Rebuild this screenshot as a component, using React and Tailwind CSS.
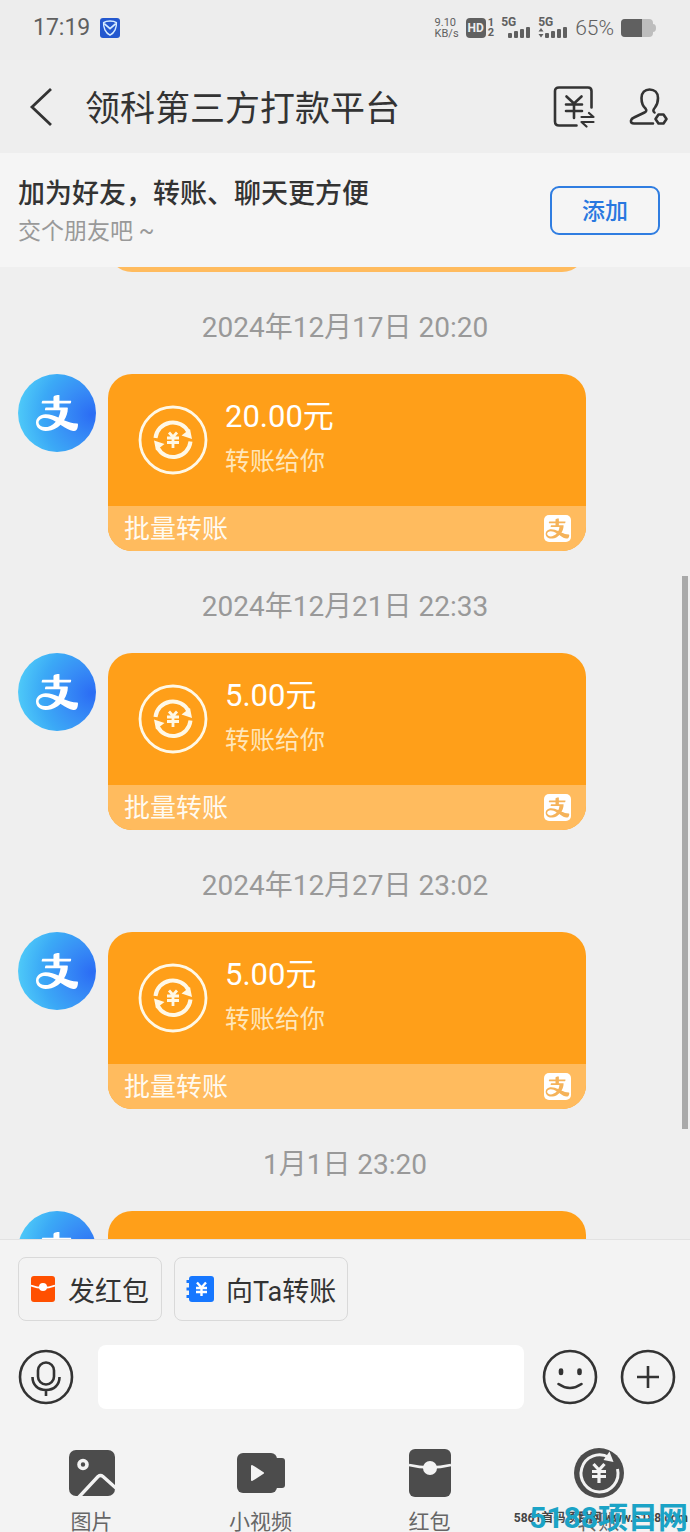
import { useState } from "react";
import { AiOutlineAlipay } from "react-icons/ai";

const messages = [
  { date: "2024年12月17日 20:20", amount: "20.00元" },
  { date: "2024年12月21日 22:33", amount: "5.00元" },
  { date: "2024年12月27日 23:02", amount: "5.00元" },
  { date: "1月1日 23:20", amount: "5.00元" },
];

function ShieldIcon() {
  return (
    <svg viewBox="0 0 20 20" className="size-5">
      <rect width="20" height="20" rx="3" fill="#2458cf" />
      <path d="M10 3 C7.5 3 5 3.6 3.6 4.6 C3.2 9.5 5.4 15 10 17.2 C14.6 15 16.8 9.5 16.4 4.6 C15 3.6 12.5 3 10 3 Z" fill="none" stroke="#d6ecff" strokeWidth="1.4" />
      <path d="M4.2 5.6 L10 10.6 L15.8 5.6" fill="none" stroke="#d6ecff" strokeWidth="1.8" />
    </svg>
  );
}

function SignalBars({ arrows }) {
  return (
    <svg viewBox="0 0 30 12" className="h-3 w-[30px]" fill="#606060">
      {arrows && <path d="M0.5 4.5 L3 1 L5.5 4.5 Z M0.5 7 L3 10.5 L5.5 7 Z" />}
      <rect x="7" y="6" width="4" height="5" rx="1" />
      <rect x="13" y="4" width="4" height="7" rx="1" />
      <rect x="19" y="2" width="4" height="9" rx="1" />
      <rect x="25" y="0" width="4" height="11" rx="1" />
    </svg>
  );
}

function BatteryIcon() {
  return (
    <svg viewBox="0 0 36 18" className="h-[18px] w-9">
      <path d="M4 0 H28 A4 4 0 0 1 32 4 V5 A3 4 0 0 1 32 13 V14 A4 4 0 0 1 28 18 H4 A4 4 0 0 1 0 14 V4 A4 4 0 0 1 4 0 Z" fill="#bdbdbd" />
      <path d="M4 0 H21 V18 H4 A4 4 0 0 1 0 14 V4 A4 4 0 0 1 4 0 Z" fill="#606060" />
    </svg>
  );
}

function TransferListIcon() {
  return (
    <svg viewBox="0 0 42 42" className="size-[42px]" fill="none" stroke="#333" strokeWidth="2.6" strokeLinecap="round" strokeLinejoin="round">
      <path d="M23.5 39.5 H6 Q2 39.5 2 35.5 V5 Q2 1.5 6 1.5 H35 Q38.5 1.5 38.5 5 V21.5" />
      <path d="M13.5 10.5 L21 17.5 L28.5 10.5 M13 18.5 H29 M13 25 H29 M21 18 V32" />
      <path d="M28.5 31 H40.5 L36 27 M40.5 36 H28.5 L33.5 40.5" strokeWidth="2.2" />
    </svg>
  );
}

function ContactIcon() {
  return (
    <svg viewBox="0 0 40 40" className="size-10" fill="none" stroke="#333" strokeWidth="2.6" strokeLinecap="round" strokeLinejoin="round">
      <path d="M24 36.5 H5 Q1.5 36.5 2 33.5 Q2.5 31.5 5 30.5 L15.5 25.5 Q18.5 24 16.5 21.5 Q12.5 18 12.5 11 C12.5 5.5 16 2.5 20.5 2.5 C25.5 2.5 29 5.5 29 11 Q29 16.5 26 20.5 Q23 24 25.5 25.5" />
      <path d="M29.5 27.5 H34.5 L37.5 32 L34.5 36.5 H29.5 L26.5 32 Z" />
    </svg>
  );
}

function TransferBadge() {
  return (
    <svg viewBox="0 0 70 70" className="size-[70px] shrink-0" fill="none" stroke="#fff8e6">
      <circle cx="35" cy="35" r="33" strokeWidth="2.8" />
      <path d="M17.5 33 A17.5 17.5 0 0 1 50.5 27" strokeWidth="4" />
      <path d="M52.5 36.5 A17.5 17.5 0 0 1 19.5 42.5" strokeWidth="4" />
      <path d="M52 24 L54 34 L43.5 30.5 Z M18 45.5 L16 35.5 L26.5 39 Z" fill="#fff8e6" stroke="none" />
      <path d="M31 27.5 L35 32 L39 27.5 M29 33 H41 M29 37.5 H41 M35 32 V43" strokeWidth="2.8" />
    </svg>
  );
}

function Avatar() {
  return (
    <div className="flex size-[78px] shrink-0 items-center justify-center rounded-full bg-[radial-gradient(circle_at_95%_52%,#2b6cf4_0%,#3890f6_35%,#3ba9f6_60%,#4cc6f8_85%,#9fe2fb_105%)]">
      <AiOutlineAlipay className="size-12 text-white" />
    </div>
  );
}

function CardFooter() {
  return (
    <div className="flex h-[45px] items-center justify-between bg-[#ffbb5e] pr-[15px] pl-4">
      <span className="text-[26px] leading-9 text-[#fffaf0]">批量转账</span>
      <span className="flex size-[27px] items-center justify-center rounded-[5px] bg-white">
        <AiOutlineAlipay className="size-[27px] text-[#f5b35a]" />
      </span>
    </div>
  );
}

function TransferMessage({ date, amount }) {
  return (
    <li>
      <time className="block pt-[39px] pb-[29px] text-center text-[28px] leading-[34px] text-[#999]">{date}</time>
      <div className="flex gap-3 pr-[104px] pl-[18px]">
        <Avatar />
        <div className="flex-1 overflow-hidden rounded-3xl bg-[#ff9f19]">
          <div className="flex h-[132px] items-center gap-[17px] pl-[30px]">
            <TransferBadge />
            <div>
              <p className="text-[31px] leading-[44px] text-white">{amount}</p>
              <p className="text-[25px] leading-[46px] text-[#ffe6b8]">转账给你</p>
            </div>
          </div>
          <CardFooter />
        </div>
      </div>
    </li>
  );
}

function RedPacketIcon() {
  return (
    <svg viewBox="0 0 24 26" className="h-[26px] w-6">
      <rect width="24" height="26" rx="3" fill="#ff5000" />
      <path d="M0 9.5 Q12 14 24 9.5" fill="none" stroke="#fff" strokeWidth="1.8" />
      <circle cx="12" cy="11" r="4" fill="#fff" />
    </svg>
  );
}

function TransferBookIcon() {
  return (
    <svg viewBox="0 0 28 26" className="h-[26px] w-7">
      <rect x="3" width="25" height="26" rx="3" fill="#1677ff" />
      <path d="M0.5 5.5 H5 M0.5 13 H5 M0.5 20.5 H5" stroke="#1677ff" strokeWidth="3" />
      <path d="M11 6.5 L15.5 11.5 L20 6.5 M10 12 H21 M10 16 H21 M15.5 11 V20" fill="none" stroke="#fff" strokeWidth="2.4" />
    </svg>
  );
}

function MicIcon() {
  return (
    <svg viewBox="0 0 56 56" className="size-14" fill="none" stroke="#333" strokeWidth="2.6">
      <circle cx="28" cy="28" r="26" />
      <rect x="20" y="13.5" width="16" height="22" rx="8" />
      <path d="M14.5 28 C14.5 36 20 41 28 41 C36 41 41.5 36 41.5 28 M28 41 V47" />
    </svg>
  );
}

function SmileIcon() {
  return (
    <svg viewBox="0 0 56 56" className="size-14" fill="none" stroke="#333" strokeWidth="2.6" strokeLinecap="round">
      <circle cx="28" cy="28" r="26" />
      <path d="M16.5 35 Q28 43 39.5 35" />
      <path d="M19 21.5 V24 M37.5 21.5 V24" strokeWidth="4.6" />
    </svg>
  );
}

function PlusIcon() {
  return (
    <svg viewBox="0 0 56 56" className="size-14" fill="none" stroke="#333" strokeWidth="2.6">
      <circle cx="28" cy="28" r="26" />
      <path d="M28 17 V39 M17 28 H39" />
    </svg>
  );
}

function PhotoTool() {
  return (
    <svg viewBox="0 0 50 50" className="size-[50px]">
      <clipPath id="photo">
        <rect x="2" y="2" width="46" height="46" rx="7" />
      </clipPath>
      <g clipPath="url(#photo)">
        <rect x="2" y="2" width="46" height="46" fill="#4c4c4c" />
        <circle cx="16" cy="16.5" r="4" fill="none" stroke="#f3f3f3" strokeWidth="3.6" />
        <path d="M11 50 L31 28.5 Q33.5 26.5 36 28.5 L50 41" fill="none" stroke="#f3f3f3" strokeWidth="3.4" />
      </g>
    </svg>
  );
}

function VideoTool() {
  return (
    <svg viewBox="0 0 50 50" className="size-[50px]">
      <rect x="1" y="5" width="40" height="40" rx="6" fill="#4c4c4c" />
      <rect x="34" y="10" width="15" height="30" rx="3" fill="#4c4c4c" />
      <path d="M16 18 L27 25 L16 32 Z" fill="#f3f3f3" stroke="#f3f3f3" strokeWidth="2" strokeLinejoin="round" />
    </svg>
  );
}

function PacketTool() {
  return (
    <svg viewBox="0 0 50 50" className="size-[50px]">
      <rect x="4" y="1" width="42" height="48" rx="6" fill="#4c4c4c" />
      <path d="M4 17 Q25 22 46 17" fill="none" stroke="#f3f3f3" strokeWidth="2.6" />
      <circle cx="25" cy="20" r="7" fill="#f3f3f3" />
    </svg>
  );
}

function TransferTool() {
  return (
    <svg viewBox="0 0 50 50" className="size-[50px]">
      <circle cx="25" cy="25" r="25" fill="#4c4c4c" />
      <path d="M35 9.5 A18.5 18.5 0 1 0 43.5 21" fill="none" stroke="#f3f3f3" strokeWidth="3" />
      <path d="M35.5 3.5 L39.5 14 L29.5 12 Z" fill="#f3f3f3" />
      <path d="M19.5 16 L25 22 L30.5 16 M18 23.5 H32 M18 28.5 H32 M25 22 V35" fill="none" stroke="#f3f3f3" strokeWidth="3.2" />
    </svg>
  );
}

const tools = [
  { label: "图片", Icon: PhotoTool },
  { label: "小视频", Icon: VideoTool },
  { label: "红包", Icon: PacketTool },
  { label: "转账", Icon: TransferTool },
];

export default function App() {
  const [draft, setDraft] = useState("");

  return (
    <div className="relative flex h-screen flex-col overflow-hidden bg-[#eeeeee] font-[Roboto,'Noto_Sans_CJK_SC',sans-serif] text-[#333]">
      {/* Status bar */}
      <div className="flex h-[60px] shrink-0 items-center justify-between bg-[#ededed] pr-[33px] pb-1 pl-[33px] text-[#606060]">
        <div className="flex items-center gap-[10px]">
          <span className="text-[23px] leading-7">17:19</span>
          <ShieldIcon />
        </div>
        <div className="flex items-center gap-[7px]">
          <div className="text-[11px] leading-[11px]">
            <div>9.10</div>
            <div>KB/s</div>
          </div>
          <div className="flex items-center gap-[2px] font-bold">
            <span className="rounded-[4px] bg-[#606060] px-[2px] text-[12px] leading-5 text-[#ededed]">HD</span>
            <div className="text-[11px] leading-[10px]">
              <div>1</div>
              <div>2</div>
            </div>
          </div>
          <div className="flex flex-col">
            <span className="text-[12px] leading-[10px] font-bold">5G</span>
            <SignalBars />
          </div>
          <div className="flex flex-col">
            <span className="text-[12px] leading-[10px] font-bold">5G</span>
            <SignalBars arrows />
          </div>
          <span className="text-[21px] leading-7 font-light">65%</span>
          <BatteryIcon />
        </div>
      </div>

      {/* Title bar */}
      <header className="flex h-[93px] shrink-0 items-center pr-[21px] pl-[29px]">
        <button type="button" aria-label="返回">
          <svg viewBox="0 0 24 40" className="h-10 w-6" fill="none" stroke="#333" strokeWidth="2.8">
            <path d="M22 2 L3 20 L22 38" />
          </svg>
        </button>
        <h1 className="ml-8 flex-1 pt-[6px] text-[35px] leading-[48px]">领科第三方打款平台</h1>
        <button type="button" aria-label="转账记录">
          <TransferListIcon />
        </button>
        <button type="button" aria-label="好友信息" className="ml-[34px]">
          <ContactIcon />
        </button>
      </header>

      {/* Add friend banner */}
      <section className="flex h-[114px] shrink-0 items-center justify-between bg-[#f5f5f5] pr-[30px] pl-[18px]">
        <div className="pt-1">
          <h2 className="text-[27px] leading-10 font-medium">加为好友，转账、聊天更方便</h2>
          <p className="text-[23px] leading-9 text-[#999]">交个朋友吧 ~</p>
        </div>
        <button type="button" className="h-[49px] w-[110px] rounded-[9px] border-2 border-[#2f7de1] pt-1 text-[23px] leading-8 font-medium text-[#2878e0]">
          添加
        </button>
      </section>

      {/* Conversation */}
      <main className="relative min-h-0 flex-1 overflow-hidden bg-[#efefef]">
        {/* tail of the card above the fold */}
        <div className="flex h-[5px] items-end overflow-hidden pr-[104px] pl-[108px]">
          <div className="flex-1 overflow-hidden rounded-b-3xl">
            <div className="h-[45px] bg-[#ffbb5e]" />
          </div>
        </div>
        <ul>
          {messages.map((m) => (
            <TransferMessage key={m.date} {...m} />
          ))}
        </ul>
        <div className="absolute top-[309px] right-[2px] h-[553px] w-[6px] bg-[#a9a9a9]" />
      </main>

      {/* Composer */}
      <footer className="shrink-0 border-t border-[#e2e2e2] bg-[#f3f3f3] pt-[17px]">
        <div className="flex gap-3 px-[18px]">
          <button type="button" className="flex h-16 items-center gap-[13px] rounded-lg border border-[#d9d9d9] px-3">
            <RedPacketIcon />
            <span className="pt-[6px] text-[27px] leading-10">发红包</span>
          </button>
          <button type="button" className="flex h-16 items-center gap-3 rounded-lg border border-[#d9d9d9] px-[11px]">
            <TransferBookIcon />
            <span className="pt-[6px] text-[27px] leading-10">向Ta转账</span>
          </button>
        </div>

        <div className="mt-6 flex h-16 items-center pr-[14px] pl-[18px]">
          <button type="button" aria-label="语音">
            <MicIcon />
          </button>
          <input
            type="text"
            aria-label="消息"
            value={draft}
            onChange={(e) => setDraft(e.target.value)}
            className="mr-[18px] ml-6 h-full min-w-0 flex-1 rounded-lg bg-white px-4 text-[27px] outline-none"
          />
          <button type="button" aria-label="表情">
            <SmileIcon />
          </button>
          <button type="button" aria-label="更多" className="ml-[22px]">
            <PlusIcon />
          </button>
        </div>

        <div className="mt-[39px] grid grid-cols-4 px-[7px]">
          {tools.map(({ label, Icon }) => (
            <button key={label} type="button" className="flex flex-col items-center gap-[15px] text-[21px] leading-[19px] text-[#666]">
              <Icon />
              {label}
            </button>
          ))}
        </div>
      </footer>

      {/* Site watermark */}
      <div className="absolute right-[2px] bottom-0 grid items-center justify-items-end font-bold whitespace-nowrap">
        <span className="col-start-1 row-start-1 text-[12px] leading-7 text-[#444]">5861首码项目网 www.5188.com</span>
        <span className="col-start-1 row-start-1 text-[30px] leading-7 text-[#1ba3c6]">5188项目网</span>
      </div>
    </div>
  );
}
